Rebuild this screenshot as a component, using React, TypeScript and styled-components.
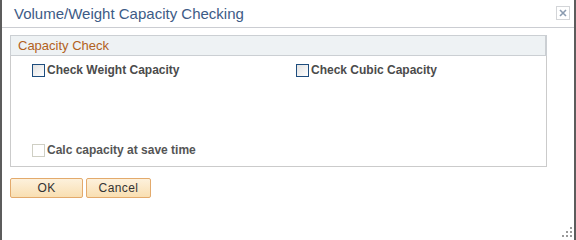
import styled, { createGlobalStyle } from "styled-components";

const GlobalStyle = createGlobalStyle`
  html, body {
    margin: 0;
    padding: 0;
    background: #ffffff;
    font-family: "Liberation Sans", Arial, sans-serif;
  }
`;

const Dialog = styled.div`
  position: relative;
  box-sizing: border-box;
  width: 576px;
  height: 240px;
  background: #ffffff;
  border-left: 2px solid #5c5c5c;
  border-right: 2px solid #5c5c5c;
`;

const TitleBar = styled.div`
  display: flex;
  align-items: center;
  justify-content: space-between;
  height: 27px;
  padding: 0 4px 0 12px;
  border-bottom: 1px solid #cbcdd2;
`;

const Title = styled.div`
  font-size: 15px;
  color: #3d5b86;
  margin-top: -1px;
`;

const CloseButton = styled.div`
  box-sizing: border-box;
  width: 14px;
  height: 14px;
  display: flex;
  align-items: center;
  justify-content: center;
  border: 1px solid #d3d5d8;
  margin-top: -1px;
`;

const Body = styled.div`
  padding: 7px 0 0 8px;
`;

const GroupBox = styled.div`
  box-sizing: border-box;
  width: 537px;
  height: 132px;
  border: 1px solid #cbcbcb;
  border-top: none;
`;

const GroupHeader = styled.div`
  box-sizing: border-box;
  height: 21px;
  margin: 0 -1px;
  padding-left: 7px;
  display: flex;
  align-items: center;
  background: #eef2f4;
  border: 1px solid #cbcfd3;
  border-right-width: 2px;
  font-size: 13px;
  color: #b2611c;
`;

const Grid = styled.div`
  display: grid;
  grid-template-columns: 264px 1fr;
  grid-template-rows: 80px 20px;
  padding: 7px 0 0 21px;
`;

const Field = styled.label<{ $disabled?: boolean }>`
  display: flex;
  align-items: flex-start;
  gap: 2px;
  font-size: 12px;
  font-weight: bold;
  color: ${({ $disabled }) => ($disabled ? "#555555" : "#4b4b4b")};
  line-height: 14px;
`;

const Box = styled.span<{ $disabled?: boolean }>`
  box-sizing: border-box;
  width: 13px;
  height: 13px;
  margin-top: 1px;
  flex: none;
  border: 1px solid ${({ $disabled }) => ($disabled ? "#cfcfc4" : "#1e4d7e")};
  background: ${({ $disabled }) =>
    $disabled ? "#ffffff" : "linear-gradient(135deg, #e2e2e2 0%, #ffffff 100%)"};
`;

const Buttons = styled.div`
  display: flex;
  gap: 3px;
  padding-top: 11px;
`;

const Button = styled.button<{ $width: number }>`
  box-sizing: border-box;
  width: ${({ $width }) => $width}px;
  height: 20px;
  padding: 0;
  border: 1px solid #e3aa6c;
  border-radius: 2px;
  background: linear-gradient(#fdf1dc, #f9dfb2);
  font-family: "Liberation Sans", Arial, sans-serif;
  font-size: 12px;
  color: #333333;
  letter-spacing: 0.4px;
`;

const Grip = styled.svg`
  position: absolute;
  right: 2px;
  bottom: 3px;
`;

export default function App() {
  return (
    <>
      <GlobalStyle />
      <Dialog>
        <TitleBar>
          <Title>Volume/Weight Capacity Checking</Title>
          <CloseButton>
            <svg width="8" height="8" viewBox="0 0 8 8">
              <path d="M1 1L7 7M7 1L1 7" stroke="#8b9bb0" strokeWidth="1.6" />
            </svg>
          </CloseButton>
        </TitleBar>
        <Body>
          <GroupBox>
            <GroupHeader>Capacity Check</GroupHeader>
            <Grid>
              <Field>
                <Box />
                Check Weight Capacity
              </Field>
              <Field>
                <Box />
                Check Cubic Capacity
              </Field>
              <Field $disabled>
                <Box $disabled />
                Calc capacity at save time
              </Field>
            </Grid>
          </GroupBox>
          <Buttons>
            <Button $width={73}>OK</Button>
            <Button $width={65}>Cancel</Button>
          </Buttons>
        </Body>
        <Grip width="10" height="10" viewBox="0 0 10 10">
          <g fill="#9a9a9a">
            <rect x="8" y="0" width="2" height="2" />
            <rect x="4" y="4" width="2" height="2" />
            <rect x="8" y="4" width="2" height="2" />
            <rect x="0" y="8" width="2" height="2" />
            <rect x="4" y="8" width="2" height="2" />
            <rect x="8" y="8" width="2" height="2" />
          </g>
        </Grip>
      </Dialog>
    </>
  );
}
